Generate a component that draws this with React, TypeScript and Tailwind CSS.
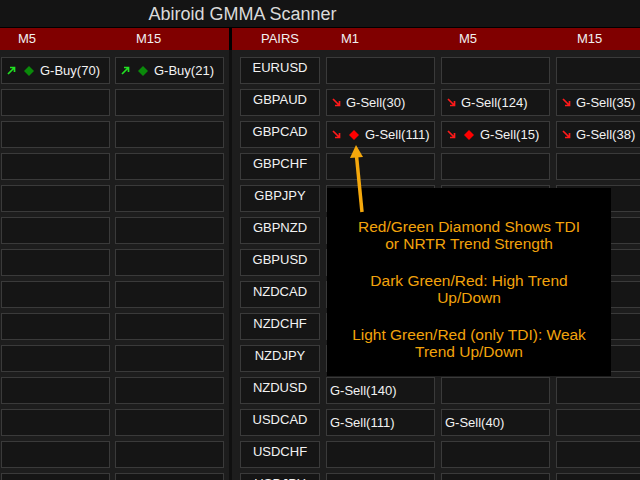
import React from "react";

type Sig = { dir?: "up" | "down"; diamond?: boolean; text: string } | null;

const PAIRS: { pair: string; sigs: Sig[] }[] = [
    { pair: "EURUSD", sigs: [null, null, null] },
    { pair: "GBPAUD", sigs: [{ dir: "down", text: "G-Sell(30)" }, { dir: "down", text: "G-Sell(124)" }, { dir: "down", text: "G-Sell(35)" }] },
    { pair: "GBPCAD", sigs: [{ dir: "down", diamond: true, text: "G-Sell(111)" }, { dir: "down", diamond: true, text: "G-Sell(15)" }, { dir: "down", text: "G-Sell(38)" }] },
    { pair: "GBPCHF", sigs: [null, null, null] },
    { pair: "GBPJPY", sigs: [null, null, null] },
    { pair: "GBPNZD", sigs: [null, null, null] },
    { pair: "GBPUSD", sigs: [null, null, null] },
    { pair: "NZDCAD", sigs: [null, null, null] },
    { pair: "NZDCHF", sigs: [null, null, null] },
    { pair: "NZDJPY", sigs: [null, null, null] },
    { pair: "NZDUSD", sigs: [{ text: "G-Sell(140)" }, null, null] },
    { pair: "USDCAD", sigs: [{ text: "G-Sell(111)" }, { text: "G-Sell(40)" }, null] },
    { pair: "USDCHF", sigs: [null, null, null] },
    { pair: "USDJPY", sigs: [null, null, null] },
];

const LEFT: Sig[][] = PAIRS.map((_, i) =>
    i === 0
        ? [{ dir: "up", diamond: true, text: "G-Buy(70)" }, { dir: "up", diamond: true, text: "G-Buy(21)" }]
        : [null, null]
);

function Arrow({ dir }: { dir: "up" | "down" }) {
    const up = dir === "up";
    return (
        <svg width="9" height="9" viewBox="0 0 9 9" className="shrink-0">
            <path
                d={up ? "M1 8L7.5 1.5M3 1.5H7.5V6" : "M1 1L7.5 7.5M7.5 3V7.5H3"}
                stroke={up ? "#22e022" : "#ff1a1a"}
                strokeWidth="1.7"
                fill="none"
            />
        </svg>
    );
}

function Diamond({ up }: { up: boolean }) {
    return (
        <svg width="10" height="10" viewBox="0 0 10 10" className="shrink-0 ml-[8px]">
            <polygon points="5,0 10,5 5,10 0,5" fill={up ? "#0a8a0a" : "#ff0000"} />
        </svg>
    );
}

function Cell({ sig }: { sig: Sig }) {
    return (
        <div className="h-[27px] w-[109px] shrink-0 border border-[#3a3a3a] bg-[#151515] flex items-center text-[13px] text-[#f2f2f2] whitespace-nowrap overflow-hidden">
            {sig && sig.dir && (
                <div className="flex items-center pl-[5px]">
                    <Arrow dir={sig.dir} />
                    {sig.diamond && <Diamond up={sig.dir === "up"} />}
                    <span className={sig.diamond ? "ml-[6px]" : "ml-[5px]"}>{sig.text}</span>
                </div>
            )}
            {sig && !sig.dir && <span className="pl-[3px]">{sig.text}</span>}
        </div>
    );
}

export default function App() {
    return (
        <div className="w-[640px] h-[480px] overflow-hidden relative bg-[#1d1d1d] font-['Liberation_Sans',Arial,sans-serif]">
            {/* Title */}
            <div className="h-[28px] bg-[#141414] border-b border-black flex items-center">
                <div className="w-[485px] text-center text-[18px] text-[#dadada] leading-none">Abiroid GMMA Scanner</div>
            </div>

            <div className="flex">
                {/* Left panel */}
                <div className="w-[229px] shrink-0">
                    <div className="h-[22px] bg-[#800000] flex items-center gap-[5px] pl-[1px] text-[13px] text-[#f0f0f0]">
                        <div className="w-[109px] pl-[17px]">M5</div>
                        <div className="w-[109px] pl-[21px]">M15</div>
                    </div>
                    <div className="flex flex-col gap-[5px] pt-[7px] pl-[1px]">
                        {LEFT.map((row, i) => (
                            <div key={i} className="flex gap-[5px]">
                                {row.map((s, j) => (
                                    <Cell key={j} sig={s} />
                                ))}
                            </div>
                        ))}
                    </div>
                </div>

                {/* Divider */}
                <div className="w-[3px] shrink-0 flex flex-col">
                    <div className="h-[22px] bg-black" />
                    <div className="flex-1 bg-[#101010]" />
                </div>

                {/* Right panel */}
                <div className="flex-1 min-w-0">
                    <div className="h-[22px] bg-[#800000] flex items-center gap-[6px] pl-[8px] text-[13px] text-[#f0f0f0] whitespace-nowrap">
                        <div className="w-[80px] shrink-0 text-center">PAIRS</div>
                        <div className="w-[109px] shrink-0 pl-[15px]">M1</div>
                        <div className="w-[109px] shrink-0 pl-[18px]">M5</div>
                        <div className="w-[109px] shrink-0 pl-[21px]">M15</div>
                    </div>
                    <div className="flex flex-col gap-[5px] pt-[7px] pl-[8px]">
                        {PAIRS.map((p) => (
                            <div key={p.pair} className="flex gap-[6px]">
                                <div className="h-[27px] w-[80px] shrink-0 border border-[#3a3a3a] bg-[#151515] flex items-center justify-center pb-[5px] text-[13px] text-[#f2f2f2]">
                                    {p.pair}
                                </div>
                                {p.sigs.map((s, j) => (
                                    <Cell key={j} sig={s} />
                                ))}
                            </div>
                        ))}
                    </div>
                </div>
            </div>

            {/* Info overlay */}
            <div className="absolute left-[327px] top-[188px] w-[284px] h-[188px] bg-black pt-[30px] text-center text-[15.5px] leading-[17px] text-[#f2a30c]">
                <p>Red/Green Diamond Shows TDI<br />or NRTR Trend Strength</p>
                <p className="mt-[20px]">Dark Green/Red: High Trend<br />Up/Down</p>
                <p className="mt-[20px]">Light Green/Red (only TDI): Weak<br />Trend Up/Down</p>
            </div>

            {/* Pointer arrow */}
            <svg className="absolute left-[340px] top-[140px]" width="30" height="76" viewBox="0 0 30 76">
                <polygon points="16,5 10,18 23,17" fill="#f5a80c" />
                <line x1="16.5" y1="16" x2="22" y2="72" stroke="#f5a80c" strokeWidth="3.5" />
            </svg>
        </div>
    );
}
